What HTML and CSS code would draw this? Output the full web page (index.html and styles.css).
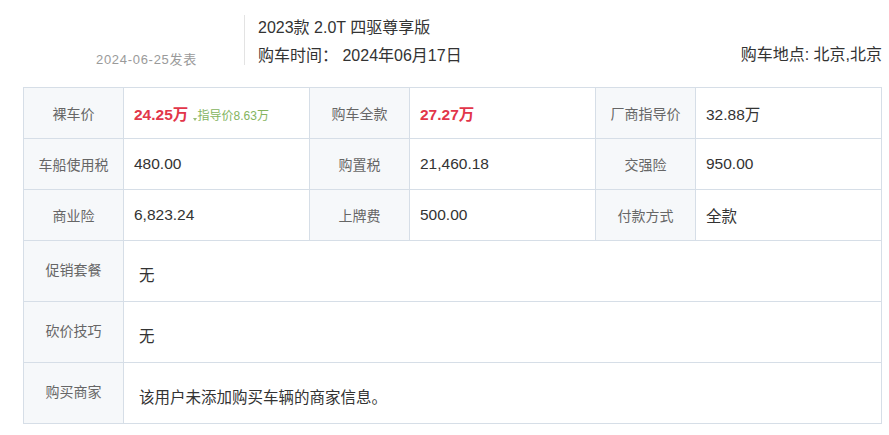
FILE: index.html
```html
<!DOCTYPE html>
<html lang="zh">
<head>
<meta charset="utf-8">
<link rel="stylesheet" href="styles.css">
</head>
<body>
<div class="page">
  <div class="head">
    <div class="date">2024-06-25发表</div>
    <div class="info">
      <div class="title">2023款 2.0T 四驱尊享版</div>
      <div class="time">购车时间： 2024年06月17日</div>
    </div>
    <div class="place">购车地点: 北京,北京</div>
  </div>
  <table class="grid">
    <colgroup>
      <col class="c-l"><col class="c-v"><col class="c-l"><col class="c-v"><col class="c-l"><col class="c-v">
    </colgroup>
    <tr class="r-s">
      <th>裸车价</th>
      <td><span class="red">24.25万</span> <span class="guide"><svg class="arr" width="4" height="5" viewBox="0 0 4 5"><path d="M0 2h4L2 5z" fill="#9bbf7a"/></svg>指导价8.63万</span></td>
      <th>购车全款</th>
      <td><span class="red">27.27万</span></td>
      <th>厂商指导价</th>
      <td>32.88万</td>
    </tr>
    <tr class="r-s">
      <th>车船使用税</th>
      <td>480.00</td>
      <th>购置税</th>
      <td>21,460.18</td>
      <th>交强险</th>
      <td>950.00</td>
    </tr>
    <tr class="r-s">
      <th>商业险</th>
      <td>6,823.24</td>
      <th>上牌费</th>
      <td>500.00</td>
      <th>付款方式</th>
      <td>全款</td>
    </tr>
    <tr class="r-l">
      <th>促销套餐</th>
      <td colspan="5">无</td>
    </tr>
    <tr class="r-l">
      <th>砍价技巧</th>
      <td colspan="5">无</td>
    </tr>
    <tr class="r-l">
      <th>购买商家</th>
      <td colspan="5">该用户未添加购买车辆的商家信息。</td>
    </tr>
  </table>
</div>
</body>
</html>
```

FILE: styles.css
```css
* { box-sizing: border-box; }
html, body { margin: 0; padding: 0; background: #fff; }
body {
  font-family: "Liberation Sans", Arial, "Noto Sans CJK SC", sans-serif;
  color: #333;
}
.page { width: 889px; height: 435px; overflow: hidden; }
.head {
  display: flex;
  align-items: flex-start;
  height: 87px;
  padding-top: 15px;
}
.date {
  width: 244px;
  padding-left: 96px;
  padding-top: 34px;
  font-size: 13px;
  letter-spacing: 0.7px;
  color: #9a9a9a;
  height: 50px;
}
.info {
  border-left: 1px solid #e3e3e3;
  height: 50px;
  padding-left: 13px;
  flex: 1;
}
.title, .time {
  font-size: 16px;
  line-height: 28px;
  color: #333;
}
.title { margin-top: -1px; }
.place {
  padding-top: 26px;
  padding-right: 7px;
  font-size: 16px;
  color: #333;
}
.grid {
  margin-left: 23px;
  width: 859px;
  border-collapse: collapse;
  table-layout: fixed;
}
.c-l { width: 100px; }
.c-v { width: 186px; }
.grid th, .grid td {
  border: 1px solid #d6dee7;
  padding: 0;
}
.grid th {
  background: #f6f8fa;
  font-weight: normal;
  font-size: 14px;
  color: #666;
  text-align: center;
}
.grid td {
  background: #fff;
  font-size: 15.5px;
  color: #333;
  padding-left: 10px;
}
.r-s { height: 51px; }
.r-l { height: 61px; }
.r-l th { vertical-align: top; padding-top: 18px; }
.r-l td { vertical-align: top; padding-top: 22px; padding-left: 15px; }
.red { color: #e2364a; font-weight: bold; font-size: 15.5px; }
.guide { color: #84b45e; font-size: 12px; }
.arr { margin-right: 1px; vertical-align: -1px; }
```
